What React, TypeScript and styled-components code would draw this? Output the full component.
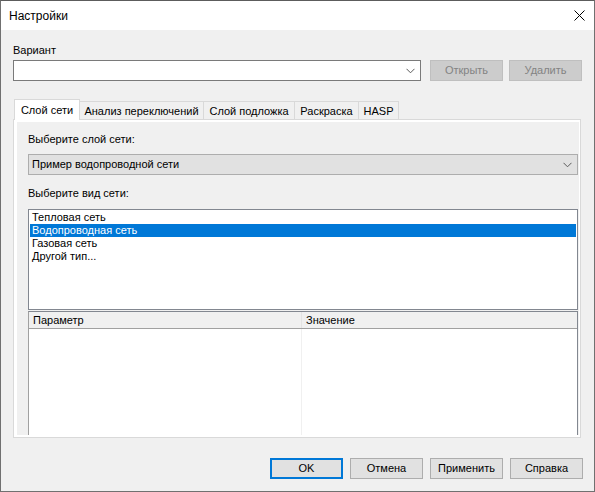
import React from "react";
import styled, { createGlobalStyle, css } from "styled-components";

const Global = createGlobalStyle`
  html, body { margin: 0; padding: 0; background: #f0f0f0; }
  body { width: 595px; height: 492px; overflow: hidden; }
  *, *::before, *::after { box-sizing: border-box; }
`;

const FONT = `"Liberation Sans", Arial, sans-serif`;

const Window = styled.div`
  width: 595px;
  height: 492px;
  display: flex;
  flex-direction: column;
  background: #f0f0f0;
  border: 1px solid #707070;
  border-top-color: #5c5c5c;
  font-family: ${FONT};
  font-size: 11px;
  color: #000;
  overflow: hidden;
`;

const TitleBar = styled.div`
  flex: 0 0 29px;
  background: #fff;
  display: flex;
  align-items: center;
  justify-content: space-between;
  padding: 0 9px 0 8px;
`;

const Title = styled.div`
  font-size: 12px;
  line-height: 16px;
`;

const CloseIcon = styled.svg`
  display: block;
  width: 11px;
  height: 11px;
`;

const Content = styled.div`
  flex: 1;
  min-height: 0;
  display: flex;
  flex-direction: column;
  padding: 12px 11px 0 12px;
`;

const FieldLabel = styled.div<{ $gap?: number; $top?: number }>`
  flex: none;
  line-height: 16px;
  margin-top: ${(p) => p.$top ?? 0}px;
  margin-bottom: ${(p) => p.$gap ?? 0}px;
`;

const Row = styled.div`
  flex: none;
  display: flex;
  align-items: stretch;
  height: 21px;
`;

const Combo = styled.div<{ $kind: "edit" | "list"; $width?: number }>`
  display: flex;
  align-items: center;
  justify-content: space-between;
  height: 21px;
  padding: 0 5px 0 3px;
  ${(p) => (p.$width ? css`flex: 0 0 ${p.$width}px;` : css`flex: none; width: 100%;`)}
  ${(p) =>
    p.$kind === "edit"
      ? css`
          background: #fff;
          border: 1px solid #7a7a7a;
        `
      : css`
          background: #e1e1e1;
          border: 1px solid #adadad;
        `}
`;

const ComboText = styled.span`
  line-height: 19px;
  white-space: nowrap;
`;

const Chevron = () => (
  <svg width="9" height="6" viewBox="0 0 9 6" style={{ display: "block" }}>
    <polyline points="0.5,0.8 4.5,4.8 8.5,0.8" fill="none" stroke="#5a5a5a" strokeWidth="1" />
  </svg>
);

const Button = styled.button<{ $disabled?: boolean; $default?: boolean; $ml?: number }>`
  flex: 0 0 73px;
  height: 21px;
  margin: 0 0 0 ${(p) => p.$ml ?? 0}px;
  padding: 0;
  font-family: ${FONT};
  font-size: 11px;
  line-height: 17px;
  text-align: center;
  color: #000;
  background: #e1e1e1;
  border: 1px solid #adadad;
  ${(p) =>
    p.$default &&
    css`
      border: 2px solid #0078d7;
    `}
  ${(p) =>
    p.$disabled &&
    css`
      background: #cccccc;
      border-color: #bfbfbf;
      color: #838383;
    `}
`;

const TabStrip = styled.div`
  flex: none;
  display: flex;
  align-items: flex-end;
  height: 20px;
  margin-top: 18px;
  padding-left: 1px;
`;

const Tab = styled.div<{ $active?: boolean; $width: number }>`
  flex: 0 0 ${(p) => p.$width}px;
  margin-right: -1px;
  display: flex;
  align-items: center;
  justify-content: center;
  white-space: nowrap;
  border: 1px solid #d9d9d9;
  border-bottom: none;
  ${(p) =>
    p.$active
      ? css`
          height: 21px;
          margin-bottom: -1px;
          background: #fff;
          position: relative;
          z-index: 1;
        `
      : css`
          height: 18px;
          padding-top: 1px;
          background: #f0f0f0;
        `}
`;

const Panel = styled.div`
  flex: none;
  height: 319px;
  width: 568px;
  display: flex;
  overflow: hidden;
  border: 1px solid #d9d9d9;
  background: #fff;
  padding: 2px 1px 2px 3px;
`;

const Page = styled.div`
  flex: 1;
  min-height: 0;
  display: flex;
  flex-direction: column;
  background: #f0f0f0;
  padding: 9px 1px 0 11px;
  overflow: hidden;
`;

const ListBox = styled.div`
  flex: 0 0 101px;
  background: #fff;
  border: 1px solid #828790;
  padding: 1px 1px 0 1px;
  margin-top: 8px;
`;

const ListItem = styled.div<{ $selected?: boolean }>`
  height: 13px;
  line-height: 13px;
  padding-left: 2px;
  white-space: nowrap;
  ${(p) =>
    p.$selected &&
    css`
      background: #0078d7;
      color: #fff;
    `}
`;

const Table = styled.div`
  flex: 0 0 160px;
  margin-top: 1px;
  display: flex;
  flex-direction: column;
  background: #fff;
  border: 1px solid #828790;
  border-left-color: #a0a0a0;
`;

const HeaderRow = styled.div`
  flex: none;
  display: grid;
  grid-template-columns: 273px 1fr;
  height: 17px;
  background: #f0f0f0;
  border-bottom: 1px solid #a0a0a0;
`;

const HeaderCell = styled.div`
  line-height: 16px;
  padding-left: 4px;
  border-right: 1px solid #e3e3e3;
  &:last-child { border-right: none; }
`;

const TableBody = styled.div`
  flex: 1;
  display: grid;
  grid-template-columns: 273px 1fr;
`;

const BodyColumn = styled.div`
  border-right: 1px solid #f0f0f0;
  &:last-child { border-right: none; }
`;

const Footer = styled.div`
  flex: none;
  display: flex;
  justify-content: flex-end;
  gap: 7px;
  margin-top: 20px;
`;

const networkTypes = ["Тепловая сеть", "Водопроводная сеть", "Газовая сеть", "Другой тип..."];

const tabs: { label: string; width: number }[] = [
  { label: "Слой сети", width: 66 },
  { label: "Анализ переключений", width: 125 },
  { label: "Слой подложка", width: 92 },
  { label: "Раскраска", width: 65 },
  { label: "HASP", width: 41 },
];

export default function App() {
  return (
    <>
      <Global />
      <Window>
        <TitleBar>
          <Title>Настройки</Title>
          <CloseIcon viewBox="0 0 11 11">
            <line x1="0.5" y1="0.5" x2="10.5" y2="10.5" stroke="#000" strokeWidth="1" />
            <line x1="10.5" y1="0.5" x2="0.5" y2="10.5" stroke="#000" strokeWidth="1" />
          </CloseIcon>
        </TitleBar>
        <Content>
          <FieldLabel $gap={2}>Вариант</FieldLabel>
          <Row>
            <Combo $kind="edit" $width={408}>
              <ComboText />
              <Chevron />
            </Combo>
            <Button $disabled $ml={9}>Открыть</Button>
            <Button $disabled $ml={6}>Удалить</Button>
          </Row>
          <TabStrip>
            {tabs.map((t, i) => (
              <Tab key={t.label} $active={i === 0} $width={t.width}>
                {t.label}
              </Tab>
            ))}
          </TabStrip>
          <Panel>
            <Page>
              <FieldLabel $gap={7}>Выберите слой сети:</FieldLabel>
              <Combo $kind="list">
                <ComboText>Пример водопроводной сети</ComboText>
                <Chevron />
              </Combo>
              <FieldLabel $top={10}>Выберите вид сети:</FieldLabel>
              <ListBox>
                {networkTypes.map((n, i) => (
                  <ListItem key={n} $selected={i === 1}>
                    {n}
                  </ListItem>
                ))}
              </ListBox>
              <Table>
                <HeaderRow>
                  <HeaderCell>Параметр</HeaderCell>
                  <HeaderCell>Значение</HeaderCell>
                </HeaderRow>
                <TableBody>
                  <BodyColumn />
                  <BodyColumn />
                </TableBody>
              </Table>
            </Page>
          </Panel>
          <Footer>
            <Button $default>OK</Button>
            <Button>Отмена</Button>
            <Button>Применить</Button>
            <Button>Справка</Button>
          </Footer>
        </Content>
      </Window>
    </>
  );
}
